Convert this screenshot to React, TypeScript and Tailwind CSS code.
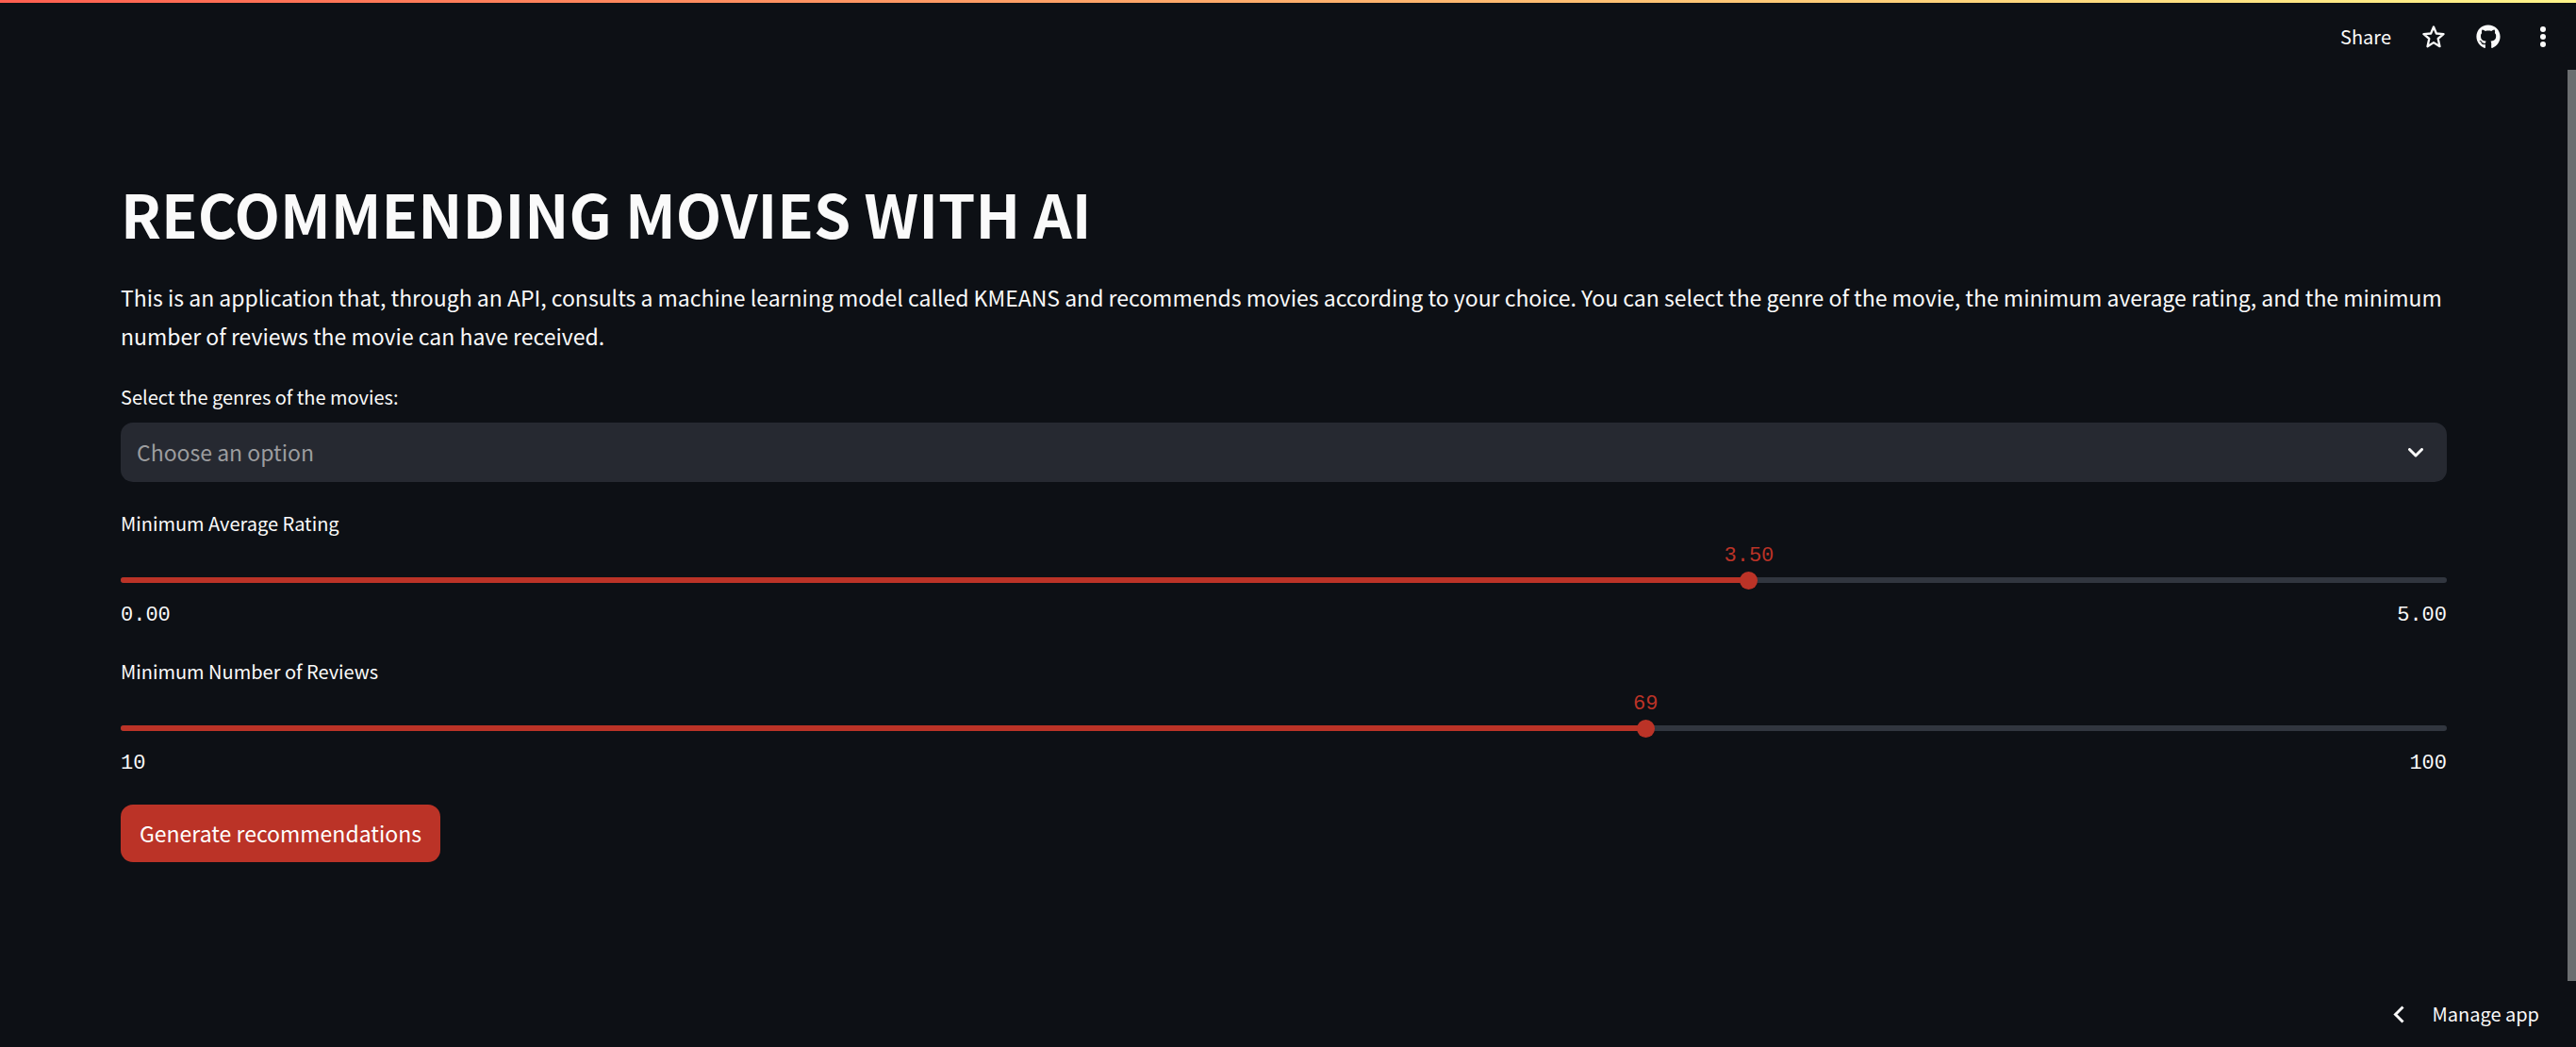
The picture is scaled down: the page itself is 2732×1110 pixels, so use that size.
import { useId, useState } from "react";
import { FaGithub } from "react-icons/fa";

type SliderProps = {
  label: string;
  min: number;
  max: number;
  step: number;
  initial: number;
  digits: number;
};

function Slider({ label, min, max, step, initial, digits }: SliderProps) {
  const id = useId();
  const [value, setValue] = useState(initial);
  const percent = `${((value - min) / (max - min)) * 100}%`;

  return (
    <div className="flex flex-col">
      <label htmlFor={id} className="text-[20px] leading-8">
        {label}
      </label>
      <div className="relative mt-1 h-7 font-['Liberation_Mono',monospace] text-[22px] leading-[30px] text-[#bb3327]">
        <output htmlFor={id} className="absolute -translate-x-1/2" style={{ left: percent }}>
          {value.toFixed(digits)}
        </output>
      </div>
      <div className="relative flex h-6 items-center">
        <div className="h-[6px] w-full overflow-hidden rounded-[3px] bg-[#31363f]">
          <div className="h-full bg-[#bb3327]" style={{ width: percent }} />
        </div>
        <input
          id={id}
          type="range"
          min={min}
          max={max}
          step={step}
          value={value}
          onChange={(e) => setValue(Number(e.target.value))}
          className="absolute -inset-x-[9px] inset-y-0 cursor-pointer appearance-none bg-transparent [&::-webkit-slider-thumb]:size-[19px] [&::-webkit-slider-thumb]:appearance-none [&::-webkit-slider-thumb]:rounded-full [&::-webkit-slider-thumb]:bg-[#bb3327]"
        />
      </div>
      <div className="mt-[11px] flex justify-between font-['Liberation_Mono',monospace] text-[22px] leading-[30px]">
        <span>{min.toFixed(digits)}</span>
        <span>{max.toFixed(digits)}</span>
      </div>
    </div>
  );
}

function Header() {
  return (
    <header className="flex h-[74px] shrink-0 flex-col">
      <div className="h-[3px] bg-linear-to-r from-[#ff5f50] to-[#fff58a]" />
      <div className="flex flex-1 items-center justify-end gap-[33px] pr-[23px]">
        <button type="button" className="text-[20px] leading-8">
          Share
        </button>
        <button type="button" aria-label="Favorite">
          <svg viewBox="0 0 24 24" className="size-6" fill="none" stroke="currentColor" strokeWidth="2.3" strokeLinejoin="round">
            <path d="M12 1.500l2.900 7 7.600.6-5.800 4.900 1.800 8.200-6.500-4.100-6.500 4.100 1.800-8.200L1.500 9.100l7.600-.6z" />
          </svg>
        </button>
        <button type="button" aria-label="View source on GitHub">
          <FaGithub className="size-[26px]" />
        </button>
        <button type="button" aria-label="Menu" className="flex w-6 justify-center">
          <svg viewBox="0 0 6 24" className="h-6 w-[6px]" fill="currentColor">
            <circle cx="3" cy="4" r="3" />
            <circle cx="3" cy="12" r="3" />
            <circle cx="3" cy="20" r="3" />
          </svg>
        </button>
      </div>
    </header>
  );
}

function GenreSelect() {
  return (
    <div className="flex flex-col gap-[11px]">
      <label htmlFor="genres" className="text-[20px] leading-8">
        Select the genres of the movies:
      </label>
      <div className="relative">
        <select
          id="genres"
          defaultValue=""
          className="h-[63px] w-full appearance-none rounded-[13px] bg-[#262931] px-[17px] text-[23px] text-[#9c9d9f]"
        >
          <option value="">Choose an option</option>
        </select>
        <svg
          viewBox="0 0 16 10"
          className="pointer-events-none absolute top-1/2 right-[25px] h-[10px] w-4 -translate-y-1/2"
          fill="none"
          stroke="currentColor"
          strokeWidth="3"
          strokeLinecap="round"
          strokeLinejoin="round"
        >
          <path d="M1.500 1.500L8 8l6.500-6.500" />
        </svg>
      </div>
    </div>
  );
}

export default function App() {
  return (
    <div className="flex min-h-screen flex-col bg-[#0d1015] font-['Noto_Sans_CJK_SC',sans-serif] text-[#fafafa]">
      <Header />
      <div className="flex flex-1">
        <main className="flex min-w-0 flex-1 flex-col gap-7 px-32 pt-[114px]">
          <h1 className="mb-[3px] text-[63px] leading-[76px] font-bold">RECOMMENDING MOVIES WITH AI</h1>
          <p className="text-[23px] leading-[41px]">
            This is an application that, through an API, consults a machine learning model called KMEANS and
            recommends movies according to your choice. You can select the genre of the movie, the minimum average
            rating, and the minimum number of reviews the movie can have received.
          </p>
          <GenreSelect />
          <Slider label="Minimum Average Rating" min={0} max={5} step={0.01} initial={3.5} digits={2} />
          <Slider label="Minimum Number of Reviews" min={10} max={100} step={1} initial={69} digits={0} />
          <button
            type="button"
            className="h-[61px] self-start rounded-[13px] bg-[#bb3327] px-5 text-[23px] text-white"
          >
            Generate recommendations
          </button>
        </main>
        <div className="w-[9px] bg-[#6b6e70]" />
      </div>
      <footer className="flex h-[70px] shrink-0 items-center justify-end pr-[39px]">
        <button type="button" className="flex items-center gap-[29px] text-[20px] leading-8">
          <svg viewBox="0 0 12 19" className="h-[19px] w-3" fill="none" stroke="currentColor" strokeWidth="3">
            <path d="M10.500 1.500l-8 8 8 8" />
          </svg>
          Manage app
        </button>
      </footer>
    </div>
  );
}
